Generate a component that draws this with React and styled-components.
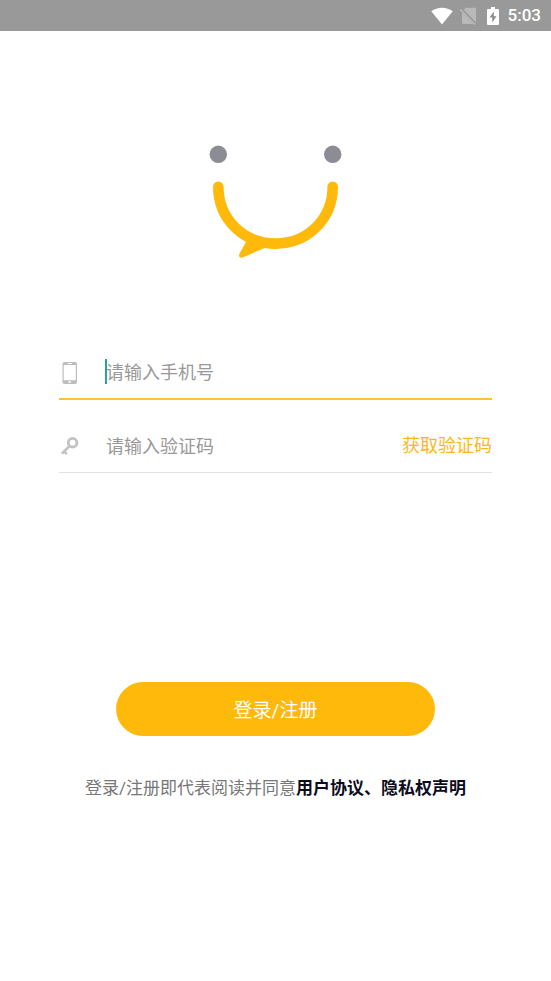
import React, { useState } from 'react';
import styled, { createGlobalStyle } from 'styled-components';

const GlobalStyle = createGlobalStyle`
  * {
    box-sizing: border-box;
  }

  body {
    margin: 0;
    background: #ffffff;
    font-family: Roboto, "Noto Sans CJK SC", sans-serif;
  }

  button,
  input {
    font-family: inherit;
  }
`;

const Screen = styled.div`
  min-height: 100vh;
  display: flex;
  flex-direction: column;
`;

const StatusBar = styled.header`
  display: flex;
  align-items: center;
  justify-content: flex-end;
  height: 31px;
  padding: 0 10px;
  background: #999999;
  color: #ffffff;
`;

const StatusIcon = styled.svg`
  display: block;
  margin-right: ${({ $gap }) => $gap}px;
`;

const Clock = styled.span`
  font-size: 17px;
  font-weight: 500;
  line-height: 31px;
`;

const Content = styled.main`
  display: flex;
  flex-direction: column;
  align-items: center;
  padding: 112px 59px 0;
`;

const Logo = styled.svg`
  display: block;
`;

const LoginForm = styled.form`
  display: flex;
  flex-direction: column;
  align-items: center;
  width: 100%;
  margin-top: 66px;
`;

const Field = styled.div`
  display: flex;
  align-items: center;
  width: 100%;
  height: 55px;
  margin-top: 18px;
  padding-top: 2px;
  border-bottom: ${({ $active }) => ($active ? '2px solid #fdc42f' : '1px solid #e2e2e2')};
`;

const FieldIcon = styled.label`
  flex: none;
  width: 47px;

  svg {
    display: block;
  }
`;

const InputWrap = styled.div`
  position: relative;
  flex: 1;
  min-width: 0;
`;

const Input = styled.input`
  display: block;
  width: 100%;
  height: 30px;
  padding: 0;
  border: 0;
  outline: none;
  background: transparent;
  color: #333333;
  caret-color: #26a69a;
  font-size: 18px;

  &::placeholder {
    color: #999999;
    opacity: 1;
  }
`;

const Caret = styled.span`
  position: absolute;
  top: 1px;
  left: -1px;
  width: 2px;
  height: 25px;
  background: #26a69a;
`;

const CodeButton = styled.button`
  flex: none;
  padding: 0;
  border: 0;
  background: none;
  color: #fdb813;
  font-size: 18px;
  line-height: 30px;
  cursor: pointer;
`;

const SubmitButton = styled.button`
  width: calc(100% - 114px);
  height: 54px;
  margin-top: 209px;
  padding: 0 0 2px;
  border: 0;
  border-radius: 27px;
  background: #ffb90a;
  color: #ffffff;
  font-size: 19px;
  cursor: pointer;
`;

const Agreement = styled.p`
  margin: 39px 0 0;
  color: #777777;
  font-size: 17px;
  line-height: 26px;
  text-align: center;
`;

const AgreementLink = styled.a`
  color: #0c0c1c;
  font-weight: 700;
  text-decoration: none;
`;

const SmileLogo = () => (
  <Logo width="135" height="118" viewBox="0 0 135 118" aria-hidden="true">
    <circle cx="10.3" cy="11.3" r="8.7" fill="#8c8c94" />
    <circle cx="124.7" cy="11.3" r="8.7" fill="#8c8c94" />
    <path
      d="M10.3 43.8C10.3 76 35.5 100.6 67.5 100.6S124.7 76 124.7 43.8"
      fill="none"
      stroke="#ffb90a"
      strokeWidth="10.6"
      strokeLinecap="round"
    />
    <path
      d="M38.5 98L31.2 111.2Q30.4 115.8 34.6 114.6L56 105.2L60 101L44 94Z"
      fill="#ffb90a"
    />
  </Logo>
);

const PhoneIcon = () => (
  <svg width="22" height="24" viewBox="0 0 22 24" aria-hidden="true">
    <rect x="3.5" y="1" width="14.5" height="22" rx="2" fill="#bdbdbd" />
    <rect x="4.7" y="4" width="12.1" height="15.2" fill="#ffffff" />
    <rect x="8.5" y="2" width="4.5" height="1" rx="0.5" fill="#ffffff" />
    <rect x="9.2" y="20.3" width="3" height="1.5" rx="0.7" fill="#ffffff" />
  </svg>
);

const KeyIcon = () => (
  <svg width="22" height="24" viewBox="0 0 22 24" aria-hidden="true">
    <g fill="none" stroke="#c2c2c2">
      <circle cx="13.6" cy="8.7" r="4.3" strokeWidth="2.8" />
      <path d="M10.7 11.8L2.8 19.7" strokeWidth="2.6" />
      <path d="M4.8 17.2L7.8 20.2" strokeWidth="2.6" />
    </g>
  </svg>
);

const SystemStatus = () => (
  <StatusBar>
    <StatusIcon $gap={7} width="22" height="18" viewBox="0 0 22 18" aria-hidden="true">
      <path d="M0.3 4.2C6.5 -0.5 15.5 -0.5 21.7 4.2L11 17.6Z" fill="#ffffff" />
    </StatusIcon>
    <StatusIcon $gap={10} width="17" height="18" viewBox="0 0 17 18" aria-hidden="true">
      <path d="M2 4.2L6 0.7H14.5Q16 0.7 16 2.2V17H3.5Q2 17 2 15.5Z" fill="#b9b9b9" />
      <path d="M0.8 1.8L15.5 17" stroke="#999999" strokeWidth="3" />
      <path d="M0.3 2.6L15 17.6" stroke="#b9b9b9" strokeWidth="1.4" />
    </StatusIcon>
    <StatusIcon $gap={9} width="12" height="18" viewBox="0 0 12 18" aria-hidden="true">
      <path d="M4 0H8V2H11Q12 2 12 3V17Q12 18 11 18H1Q0 18 0 17V3Q0 2 1 2H4Z" fill="#ffffff" />
      <path d="M6.8 4.5L2.5 10.6H5.3V15.6L9.5 9.2H6.8Z" fill="#8c8c8c" />
    </StatusIcon>
    <Clock>5:03</Clock>
  </StatusBar>
);

const App = () => {
  const [phone, setPhone] = useState('');
  const [code, setCode] = useState('');

  return (
    <Screen>
      <GlobalStyle />
      <SystemStatus />
      <Content>
        <SmileLogo />
        <LoginForm onSubmit={(event) => event.preventDefault()}>
          <Field $active>
            <FieldIcon htmlFor="phone">
              <PhoneIcon />
            </FieldIcon>
            <InputWrap>
              <Input
                id="phone"
                type="tel"
                aria-label="请输入手机号"
                placeholder="请输入手机号"
                value={phone}
                onChange={(event) => setPhone(event.target.value)}
              />
              {!phone && <Caret />}
            </InputWrap>
          </Field>
          <Field>
            <FieldIcon htmlFor="code">
              <KeyIcon />
            </FieldIcon>
            <InputWrap>
              <Input
                id="code"
                type="text"
                inputMode="numeric"
                aria-label="请输入验证码"
                placeholder="请输入验证码"
                value={code}
                onChange={(event) => setCode(event.target.value)}
              />
            </InputWrap>
            <CodeButton type="button">获取验证码</CodeButton>
          </Field>
          <SubmitButton type="submit">登录/注册</SubmitButton>
        </LoginForm>
        <Agreement>
          登录/注册即代表阅读并同意
          <AgreementLink href="#agreement">用户协议、</AgreementLink>
          <AgreementLink href="#privacy">隐私权声明</AgreementLink>
        </Agreement>
      </Content>
    </Screen>
  );
};

export default App;
